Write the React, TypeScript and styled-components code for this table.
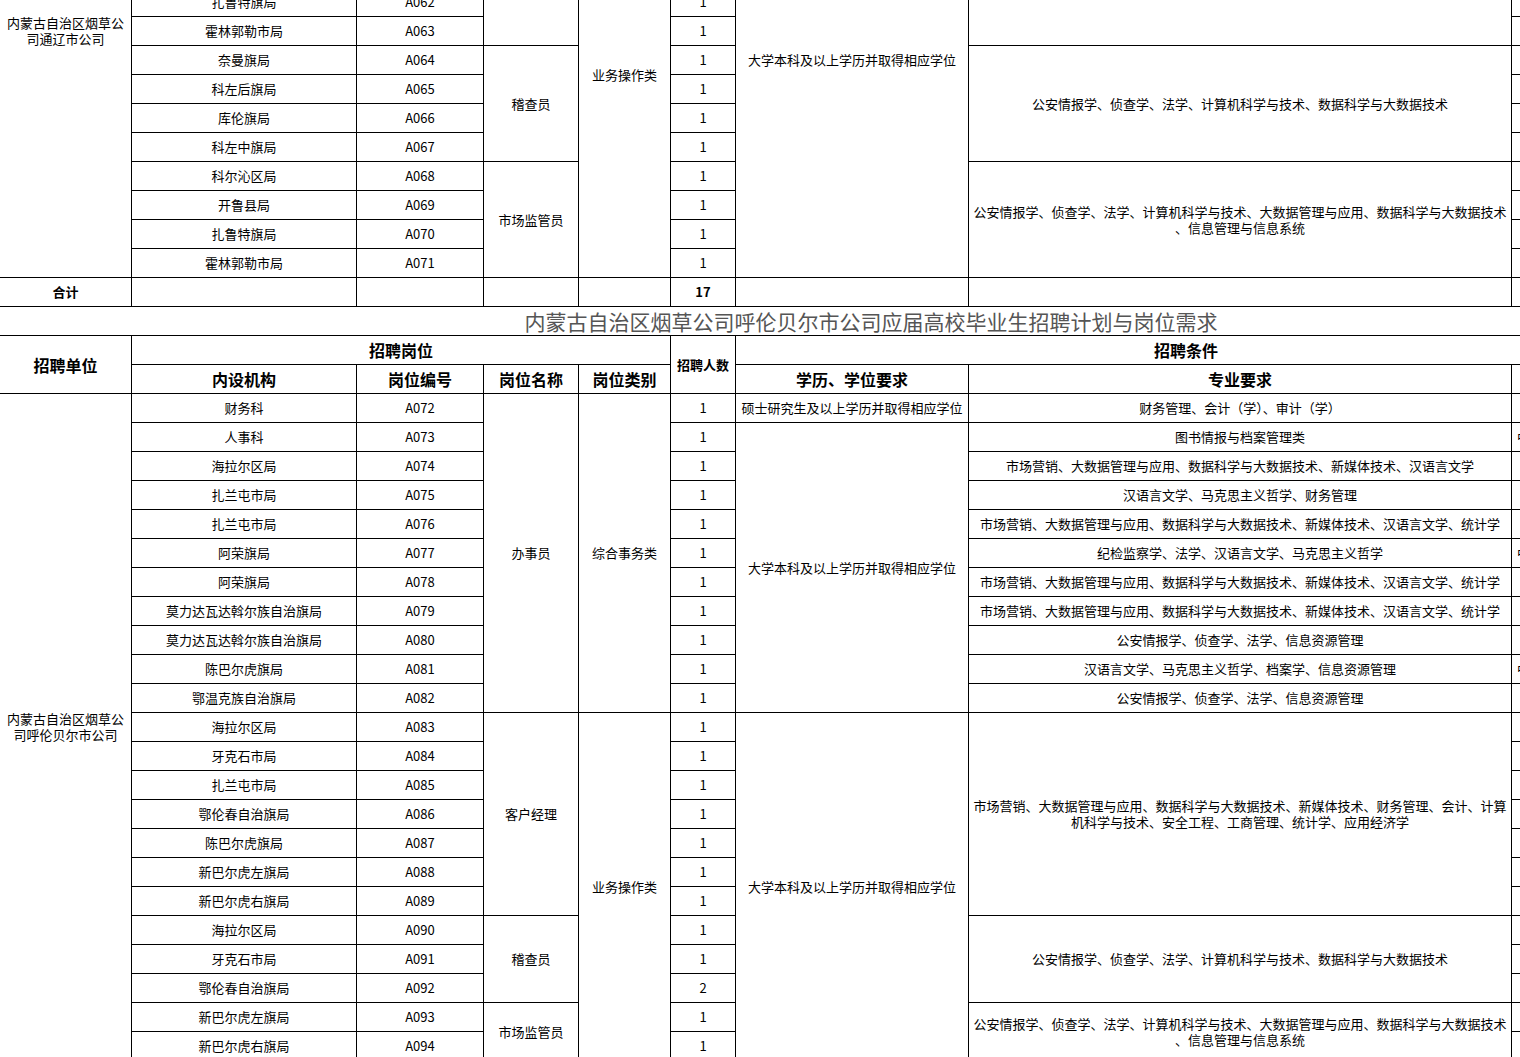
import React from "react";
import styled, { createGlobalStyle } from "styled-components";

// Types
type Span = { start: number; len: number; lines: string[] };
type Post = { unit: string; code: string; count: number; note?: string };
type Section = {
  posts: Post[];
  company: Span[];
  name: Span[];
  category: Span[];
  edu: Span[];
  major: Span[];
};

const GlobalStyle = createGlobalStyle`
  html, body {
    margin: 0;
    padding: 0;
    background: #fff;
  }
  body {
    font-family: "Noto Sans CJK SC", "Liberation Sans", sans-serif;
  }
`;

const Viewport = styled.div`
  width: 1520px;
  height: 1057px;
  overflow: hidden;
  background: #fff;
`;

// the sheet is scrolled: the first rows of the Tongliao block sit above the window
const Sheet = styled.table`
  border-collapse: collapse;
  table-layout: fixed;
  width: 1637px;
  margin: -216px 0 0 -1px;
  color: #000;
`;

const Row = styled.tr`
  height: 29px;
`;

const Cell = styled.td<{ $bold?: boolean; $size?: number; $left?: boolean }>`
  border: 1px solid #000;
  padding: ${({ $left }) => ($left ? "0 0 0 5px" : "0 4px")};
  text-align: ${({ $left }) => ($left ? "left" : "center")};
  vertical-align: middle;
  font-size: ${({ $size }) => $size ?? 13}px;
  font-weight: ${({ $bold }) => ($bold ? 700 : 400)};
  line-height: 16px;
  white-space: nowrap;
  overflow: hidden;
`;

const HeadCell = styled.th<{ $size?: number }>`
  border: 1px solid #000;
  padding: 0;
  text-align: center;
  vertical-align: middle;
  font-size: ${({ $size }) => $size ?? 16}px;
  font-weight: 700;
  line-height: 18px;
  white-space: nowrap;
  overflow: hidden;
`;

const TitleCell = styled.td`
  border-top: 1px solid #000;
  border-bottom: 1px solid #000;
  border-left: none;
  border-right: none;
  padding: 0 0 0 106px;
  text-align: center;
  vertical-align: middle;
  font-size: 21px;
  line-height: 24px;
  color: #555;
  white-space: nowrap;
`;

const Line = styled.span`
  display: block;
`;

const widths = [132, 225, 127, 95, 92, 65, 233, 543, 125];

const EDU_UNI = "大学本科及以上学历并取得相应学位";
const EDU_MASTER = "硕士研究生及以上学历并取得相应学位";
const MARKET6 = "市场营销、大数据管理与应用、数据科学与大数据技术、新媒体技术、汉语言文学、统计学";
const POLICE_IT = "公安情报学、侦查学、法学、计算机科学与技术、数据科学与大数据技术";
const POLICE_LONG = [
  "公安情报学、侦查学、法学、计算机科学与技术、大数据管理与应用、数据科学与大数据技术",
  "、信息管理与信息系统",
];
const MARKET_LONG = [
  "市场营销、大数据管理与应用、数据科学与大数据技术、新媒体技术、财务管理、会计、计算",
  "机科学与技术、安全工程、工商管理、统计学、应用经济学",
];

const one = (start: number, text: string): Span => ({ start, len: 1, lines: [text] });

const tongliao: Section = {
  posts: [
    { unit: "办公室", code: "A055", count: 1 },
    { unit: "财务科", code: "A056", count: 1 },
    { unit: "专卖监督管理科", code: "A057", count: 1 },
    { unit: "科尔沁区局", code: "A058", count: 1 },
    { unit: "开鲁县局", code: "A059", count: 1 },
    { unit: "奈曼旗局", code: "A060", count: 1 },
    { unit: "库伦旗局", code: "A061", count: 1 },
    { unit: "扎鲁特旗局", code: "A062", count: 1 },
    { unit: "霍林郭勒市局", code: "A063", count: 1 },
    { unit: "奈曼旗局", code: "A064", count: 1 },
    { unit: "科左后旗局", code: "A065", count: 1 },
    { unit: "库伦旗局", code: "A066", count: 1 },
    { unit: "科左中旗局", code: "A067", count: 1 },
    { unit: "科尔沁区局", code: "A068", count: 1 },
    { unit: "开鲁县局", code: "A069", count: 1 },
    { unit: "扎鲁特旗局", code: "A070", count: 1 },
    { unit: "霍林郭勒市局", code: "A071", count: 1 },
  ],
  company: [{ start: 0, len: 17, lines: ["内蒙古自治区烟草公", "司通辽市公司"] }],
  name: [
    { start: 0, len: 3, lines: ["办事员"] },
    { start: 3, len: 6, lines: ["客户经理"] },
    { start: 9, len: 4, lines: ["稽查员"] },
    { start: 13, len: 4, lines: ["市场监管员"] },
  ],
  category: [
    { start: 0, len: 3, lines: ["综合事务类"] },
    { start: 3, len: 14, lines: ["业务操作类"] },
  ],
  edu: [one(0, EDU_MASTER), one(1, EDU_MASTER), { start: 2, len: 15, lines: [EDU_UNI] }],
  major: [
    one(0, "汉语言文学、马克思主义哲学"),
    one(1, "财务管理、会计（学）、审计（学）"),
    one(2, "法学、公安情报学、侦查学"),
    { start: 3, len: 6, lines: MARKET_LONG },
    { start: 9, len: 4, lines: [POLICE_IT] },
    { start: 13, len: 4, lines: POLICE_LONG },
  ],
};

const hulunbuir: Section = {
  posts: [
    { unit: "财务科", code: "A072", count: 1 },
    { unit: "人事科", code: "A073", count: 1, note: "中共党员" },
    { unit: "海拉尔区局", code: "A074", count: 1 },
    { unit: "扎兰屯市局", code: "A075", count: 1 },
    { unit: "扎兰屯市局", code: "A076", count: 1 },
    { unit: "阿荣旗局", code: "A077", count: 1, note: "中共党员" },
    { unit: "阿荣旗局", code: "A078", count: 1 },
    { unit: "莫力达瓦达斡尔族自治旗局", code: "A079", count: 1 },
    { unit: "莫力达瓦达斡尔族自治旗局", code: "A080", count: 1 },
    { unit: "陈巴尔虎旗局", code: "A081", count: 1, note: "中共党员" },
    { unit: "鄂温克族自治旗局", code: "A082", count: 1 },
    { unit: "海拉尔区局", code: "A083", count: 1 },
    { unit: "牙克石市局", code: "A084", count: 1 },
    { unit: "扎兰屯市局", code: "A085", count: 1 },
    { unit: "鄂伦春自治旗局", code: "A086", count: 1 },
    { unit: "陈巴尔虎旗局", code: "A087", count: 1 },
    { unit: "新巴尔虎左旗局", code: "A088", count: 1 },
    { unit: "新巴尔虎右旗局", code: "A089", count: 1 },
    { unit: "海拉尔区局", code: "A090", count: 1 },
    { unit: "牙克石市局", code: "A091", count: 1 },
    { unit: "鄂伦春自治旗局", code: "A092", count: 2 },
    { unit: "新巴尔虎左旗局", code: "A093", count: 1 },
    { unit: "新巴尔虎右旗局", code: "A094", count: 1 },
  ],
  company: [{ start: 0, len: 23, lines: ["内蒙古自治区烟草公", "司呼伦贝尔市公司"] }],
  name: [
    { start: 0, len: 11, lines: ["办事员"] },
    { start: 11, len: 7, lines: ["客户经理"] },
    { start: 18, len: 3, lines: ["稽查员"] },
    { start: 21, len: 2, lines: ["市场监管员"] },
  ],
  category: [
    { start: 0, len: 11, lines: ["综合事务类"] },
    { start: 11, len: 12, lines: ["业务操作类"] },
  ],
  edu: [
    one(0, EDU_MASTER),
    { start: 1, len: 10, lines: [EDU_UNI] },
    { start: 11, len: 12, lines: [EDU_UNI] },
  ],
  major: [
    one(0, "财务管理、会计（学）、审计（学）"),
    one(1, "图书情报与档案管理类"),
    one(2, "市场营销、大数据管理与应用、数据科学与大数据技术、新媒体技术、汉语言文学"),
    one(3, "汉语言文学、马克思主义哲学、财务管理"),
    one(4, MARKET6),
    one(5, "纪检监察学、法学、汉语言文学、马克思主义哲学"),
    one(6, MARKET6),
    one(7, MARKET6),
    one(8, "公安情报学、侦查学、法学、信息资源管理"),
    one(9, "汉语言文学、马克思主义哲学、档案学、信息资源管理"),
    one(10, "公安情报学、侦查学、法学、信息资源管理"),
    { start: 11, len: 7, lines: MARKET_LONG },
    { start: 18, len: 3, lines: [POLICE_IT] },
    { start: 21, len: 2, lines: POLICE_LONG },
  ],
};

// renders the merged cell that starts on row i, or nothing when row i is covered by one
const spanCell = (spans: Span[], i: number, key: string) => {
  const s = spans.find((sp) => sp.start === i);
  if (!s) return null;
  return (
    <Cell key={key} rowSpan={s.len}>
      {s.lines.length === 1 ? s.lines[0] : s.lines.map((l, j) => <Line key={j}>{l}</Line>)}
    </Cell>
  );
};

const SectionRows = ({ section, id }: { section: Section; id: string }) => (
  <>
    {section.posts.map((p, i) => (
      <Row key={id + p.code}>
        {spanCell(section.company, i, "company")}
        <Cell>{p.unit}</Cell>
        <Cell>{p.code}</Cell>
        {spanCell(section.name, i, "name")}
        {spanCell(section.category, i, "category")}
        <Cell>{p.count}</Cell>
        {spanCell(section.edu, i, "edu")}
        {spanCell(section.major, i, "major")}
        <Cell $left>{p.note ?? ""}</Cell>
      </Row>
    ))}
  </>
);

const HeaderRows = () => (
  <>
    <Row>
      <HeadCell rowSpan={2}>招聘单位</HeadCell>
      <HeadCell colSpan={4}>招聘岗位</HeadCell>
      <HeadCell rowSpan={2} $size={13}>招聘人数</HeadCell>
      <HeadCell colSpan={3}>招聘条件</HeadCell>
    </Row>
    <Row>
      <HeadCell>内设机构</HeadCell>
      <HeadCell>岗位编号</HeadCell>
      <HeadCell>岗位名称</HeadCell>
      <HeadCell>岗位类别</HeadCell>
      <HeadCell>学历、学位要求</HeadCell>
      <HeadCell>专业要求</HeadCell>
      <HeadCell />
    </Row>
  </>
);

const total = (s: Section) => s.posts.reduce((n, p) => n + p.count, 0);

export default function App() {
  return (
    <>
      <GlobalStyle />
      <Viewport>
        <Sheet>
          <colgroup>
            {widths.map((w, i) => (
              <col key={i} style={{ width: w }} />
            ))}
          </colgroup>
          <tbody>
            <SectionRows section={tongliao} id="tl" />
            <Row>
              <Cell $bold>合计</Cell>
              <Cell />
              <Cell />
              <Cell />
              <Cell />
              <Cell $bold>{total(tongliao)}</Cell>
              <Cell />
              <Cell />
              <Cell />
            </Row>
            <Row>
              <TitleCell colSpan={9}>内蒙古自治区烟草公司呼伦贝尔市公司应届高校毕业生招聘计划与岗位需求</TitleCell>
            </Row>
            <HeaderRows />
            <SectionRows section={hulunbuir} id="hl" />
          </tbody>
        </Sheet>
      </Viewport>
    </>
  );
}
